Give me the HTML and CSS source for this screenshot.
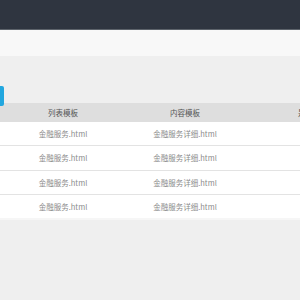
FILE: index.html
```html
<!DOCTYPE html>
<html lang="zh-CN">
<head>
    <meta charset="UTF-8">
    <meta name="viewport" content="width=device-width, initial-scale=1.0">
    <title>模板管理</title>
    <link rel="stylesheet" href="styles.css">
</head>
<body>
<div class="topbar"></div>
<div class="crumbs"></div>
<div class="main">
    <div class="toolbar">
        <button class="btn-add">添加</button>
    </div>
    <table class="list">
        <colgroup>
            <col class="col-name">
            <col class="col-list">
            <col class="col-content">
            <col class="col-show">
        </colgroup>
        <thead>
        <tr>
            <th>栏目名称</th>
            <th>列表模板</th>
            <th>内容模板</th>
            <th>是否显示</th>
        </tr>
        </thead>
        <tbody>
        <tr>
            <td>金融服务</td>
            <td>金融服务.html</td>
            <td>金融服务详细.html</td>
            <td>是</td>
        </tr>
        <tr>
            <td>金融服务</td>
            <td>金融服务.html</td>
            <td>金融服务详细.html</td>
            <td>是</td>
        </tr>
        <tr>
            <td>金融服务</td>
            <td>金融服务.html</td>
            <td>金融服务详细.html</td>
            <td>是</td>
        </tr>
        <tr>
            <td>金融服务</td>
            <td>金融服务.html</td>
            <td>金融服务详细.html</td>
            <td>是</td>
        </tr>
        </tbody>
    </table>
</div>
</body>
</html>
```

FILE: styles.css
```css
html, body {
    margin: 0;
    padding: 0;
    overflow: hidden;
}
body {
    font-family: "Noto Sans CJK SC", "Noto Sans", sans-serif;
    background-color: #efefef;
    width: 300px;
    height: 300px;
}
.topbar {
    height: 29px;
    background-color: #2f3540;
    border-bottom: 1px solid #5d636b;
}
.crumbs {
    height: 26px;
    background-color: #f8f8f8;
}
.main {
    margin-left: -120px;
    width: 500px;
    padding-top: 24px;
}
.toolbar {
    height: 20px;
    margin-bottom: 3px;
}
.btn-add {
    width: 124px;
    height: 20px;
    border: 0;
    border-radius: 2px;
    background-color: #22a7df;
    color: white;
    font-size: 8px;
    padding: 0;
}
.list {
    width: 500px;
    border-collapse: collapse;
    table-layout: fixed;
    font-size: 7.5px;
    border-bottom: 2px solid #f6f6f6;
}
.col-name,
.col-list,
.col-content {
    width: 122px;
}
.col-show {
    width: 134px;
}
.list th {
    height: 19px;
    padding: 0;
    background-color: #dedede;
    color: #555;
    font-weight: normal;
    text-align: center;
}
.list td {
    height: 23.25px;
    padding: 0;
    background-color: #fff;
    color: #8a8a8a;
    text-align: center;
    border-bottom: 1px solid #e3e3e3;
}
```
